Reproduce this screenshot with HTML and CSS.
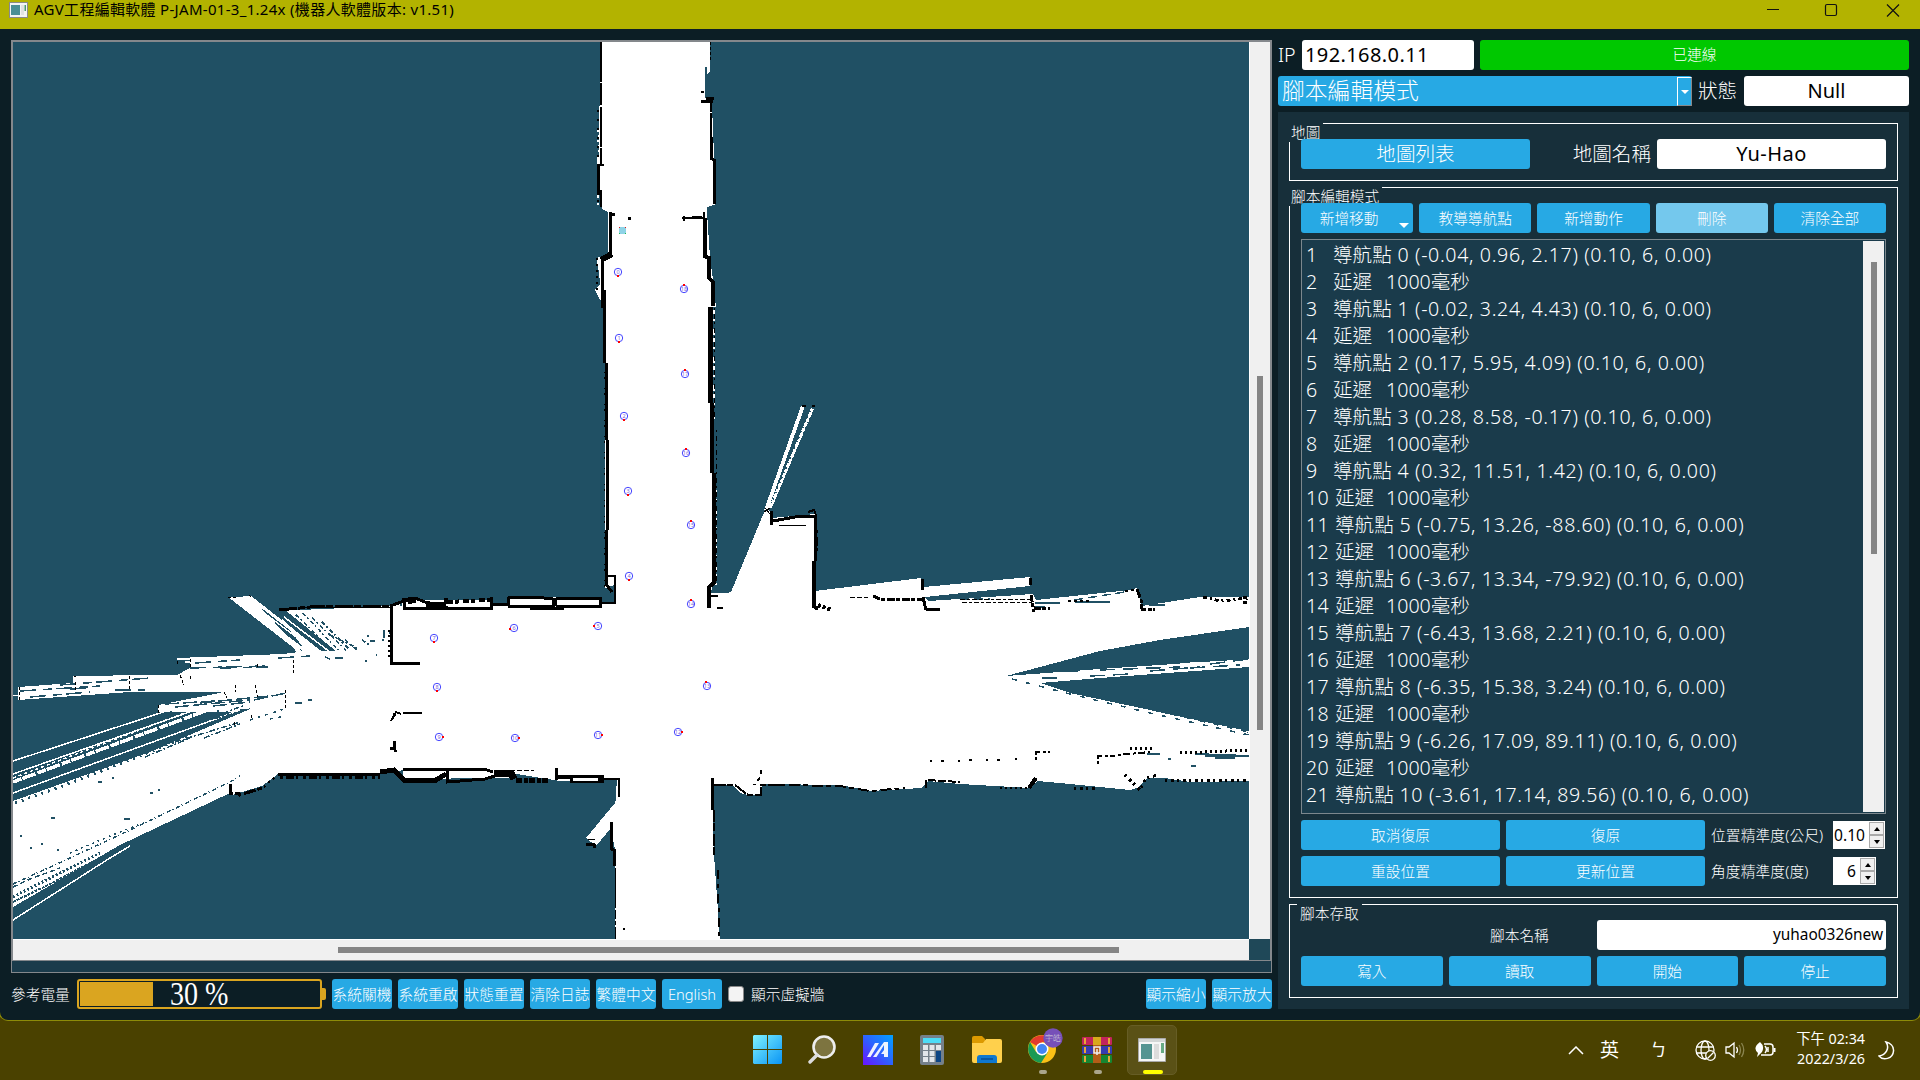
FILE: index.html
```html
<!DOCTYPE html>
<html lang="zh-Hant">
<head>
<meta charset="utf-8">
<title>AGV工程編輯軟體</title>
<link rel="stylesheet" href="styles.css">
</head>
<body>
<div class="desktop">
<div class="window">
  <header class="titlebar">
    <svg class="app-icon" width="19" height="16" viewBox="0 0 19 16"><rect x=".5" y=".5" width="18" height="15" fill="#f4f4f4" stroke="#8a8a8a"/><rect x="2" y="3" width="9" height="10" fill="#4b8f96"/><rect x="12" y="3" width="3" height="10" fill="#e2e2e2"/><rect x="15.500" y="3" width="1.500" height="6" fill="#4b9a70"/></svg>
    <span class="title">AGV工程編輯軟體 P-JAM-01-3_1.24x (機器人軟體版本: v1.51)</span>
    <svg class="caption" width="140" height="20" viewBox="0 0 140 20" fill="none" stroke="#111" stroke-width="1.2"><path d="M7 8.500h12M127 3.500l12 12M139 3.500l-12 12"/><rect x="65.500" y="3.500" width="11" height="11" rx="1.500"/></svg>
  </header>
  <main class="body">
    <section class="left">
      <div class="map-frame">
        <div class="map-view">
          <svg class="map" width="1236" height="897" viewBox="13 42 1236 897" shape-rendering="crispEdges">
            <rect x="13" y="42" width="1236" height="897" fill="#205064"/>
            <g fill="#fff">
              <path d="M602 42H710V72L707 74V82H705V98H712V105L714 156L716 204L707 207V212L710 257L713 280L716 307H713V583L711 593H727L731 592L765 510L768 506L772 518L815 514V591L921 578L924 587L1030 577V586L925 597L928 601L1000 596L1033 594L1036 600L1130 590L1137 588L1142 606L1200 597L1249 597V781L1190 782L1165 778L1147 778L1137 788L1130 790L1070 784L1037 781L1030 788L960 784L928 781L922 788L870 791L840 785L762 784L760 795L748 795L740 793L733 785H712L714 855L720 939H615V850L611 828L596 846L586 838L615 803L617 780L560 781L492 770L403 770L390 773L278 774L262 786L232 795L230 793L120 845L13 907V801L150 752L250 709L158 711L158 705L225 692L130 692L18 700V687L73 683V676L177 675L190 668V660L177 660V658L283 654L299 652L228 597H236L250 596L310 650L276 611L391 606L403 600H491V606H508V597H600V602H615V585L605 588V365L603 304L599 298L595 290L600 284L599 272L596 258L608 254L608 212L602 209L597 165L598 145Z"/>
              <path d="M764 510L801 406H805L768 510ZM13 695H30V696H13ZM587 838L615 803V826L611 828Z"/>
              <path d="M278 611L391 606V652H296Z"/>
              <path d="M403 768H492V774L446 779L403 779ZM446 770H510V778H446Z"/>
            </g>
            <g fill="#205064">
              <path d="M1006 676L1040 667L1100 651L1160 640L1249 627V659L1100 669Z"/>
              <path d="M1040 683L1100 678L1249 667V733L1150 710L1070 693Z"/>
              <path d="M273 611L285 610L336 651H318ZM262 609L275 611L306 651H301Z"/>
              <path d="M925 597L1030 586L1033 594L928 601Z"/>
              <path d="M278 776H393L430 783L500 782L616 783V800L586 836L585 850L230 798L262 788Z"/>
              <path d="M400 599H402V606H400ZM705 67h2v18h-2zM707 209h4v3h-4z"/>
            </g>
            <g fill="none" stroke="#fff" stroke-width="1.500">
              <path d="M13 761L225 692"/><path d="M13 774L195 710"/><path d="M13 793L235 712"/>
              <path d="M13 782L205 711" stroke-width="3.500" stroke-dasharray="9 1 14 2"/>
              <path d="M13 778L190 711" stroke-dasharray="3 3"/>
              <path d="M158 708H240" stroke-width="7" stroke-dasharray="12 2 30 3"/>
              <path d="M13 920L110 858L130 846" />
              <path d="M770 508L814 405" stroke-width="3" stroke-dasharray="5 1 3 2"/>
              <path d="M771 508L811 412"/>
              <path d="M74 677L152 676M185 662L240 657" stroke-width="2"/>
              <path d="M250 597L320 652M237 600L312 656" stroke-width="3"/>
              <path d="M284 617L330 652M268 616L322 656"/>
              <path d="M598 110V207M716 490V590M714 310V420" stroke-dasharray="4 5 2 8 6 3"/>
            </g>
            <g fill="none" stroke="#205064" stroke-width="1.500">
              <path d="M60 685L150 678M20 691L100 686M30 697L90 692M70 689L90 688M115 690L145 690M190 668L265 666M195 663L240 660M220 668L268 667M278 658L310 656M325 657L330 659" stroke-dasharray="16 7 9 4"/>
              <path d="M165 704L215 701M175 707L250 700M200 703L270 696M213 706L250 702M254 700L286 693M295 703L302 703M308 700L312 700" stroke-dasharray="14 4"/>
              <path d="M13 884L70 858L130 830L230 782L240 776" stroke-dasharray="4 2 1 3"/>
              <path d="M13 897L60 873L100 853" stroke-width="3" stroke-dasharray="2 2"/>
              <path d="M13 902L50 884L92 862" stroke-width="2" stroke-dasharray="3 1"/>
              <path d="M13 887L30 879L60 868" stroke-dasharray="5 3"/>
              <path d="M70 853L110 836L146 822" stroke-dasharray="2 4"/>
              <path d="M15 803L60 787L140 756L190 735" stroke-width="3" stroke-dasharray="2 5"/>
              <path d="M145 757L190 738M175 742L240 722M204 738L240 724M180 728L250 709M200 722L245 705" stroke-dasharray="6 2 2 2"/>
              <path d="M250 720L284 709M270 719L285 716" stroke-dasharray="3 5"/>
              <path d="M296 615L332 650M303 613L338 650M312 618L346 650M322 622L350 650M330 635L357 648M345 640L357 650M362 640L371 646" stroke-dasharray="4 2 2 3"/>
              <path d="M370 641h5M367 636h2M382 640h2M384 630v8M365 661h2M376 655h1M335 658h8M389 633h3" />
              <path d="M20 836h2M51 818h4M124 819h6M41 844h2M57 850h2M30 848h2M98 782h4M112 778h2M150 793h3M158 790h2"/>
              <path d="M1010 677L1080 674M1030 676L1060 675M1180 664L1240 661M1090 673L1150 670" stroke="#fff" stroke-width="2"/>
              <path d="M1040 672L1080 671M1090 676L1130 674M1100 670L1180 667M1150 671L1200 667M1210 664L1249 659M1190 668L1240 665M1042 678L1060 678" stroke-dasharray="15 8"/>
              <path d="M1012 679L1070 694L1150 713L1249 735" stroke-dasharray="5 9"/>
              <path d="M1150 711L1249 732" stroke="#fff" stroke-dasharray="9 5"/>
              <path d="M1035 603H1060M1034 607H1045M1075 602H1110M1149 605H1165M1195 754L1249 756M1205 756H1240M1215 758H1235M1147 754H1160M1168 759h3M1191 766h5" stroke-width="2"/>
              <path d="M1074 600L1125 592M960 599h30" stroke-dasharray="9 5"/>
              <path d="M597 45V70M598 92V155M714 107V125M711 45V60" stroke-dasharray="3 2"/>
            </g>
            <g fill="none" stroke="#000" stroke-width="2">
              <path d="M601 42V165" stroke-dasharray="40 1 22 2"/><path d="M598 110V207" stroke-dasharray="2 7"/><path d="M598.500 165V195" stroke-width="3"/><path d="M601 190V207M599 165h5"/>
              <path d="M610.500 212V257M610 214h5" stroke-width="3"/><path d="M601 260L612 254" stroke-width="6"/><path d="M597 258V292" stroke-dasharray="2 4"/>
              <path d="M602 260V304" stroke-width="3"/><path d="M603 290V308" stroke-width="5"/><path d="M604.500 300V363" stroke-width="3"/><path d="M606.500 363V440" stroke-width="3"/><path d="M607.500 440V530" stroke-width="3"/><path d="M606.500 530V585L612 592" stroke-width="3"/><path d="M608 576H615V604"/><path d="M604 345V590" stroke-dasharray="2 9 1 4" stroke-width="1"/>
              <path d="M710 42V62" stroke-dasharray="3 2" stroke-width="1"/><path d="M701 101H713M706 98h8" stroke-width="3"/><path d="M701 92h3"/>
              <path d="M711 103V160" stroke-dasharray="9 1 30 0"/><path d="M711 137V158L714 160V204" stroke-width="3"/>
              <path d="M682 218H704M704 212V222M684 216v5" stroke-width="2"/><path d="M628 218h3M692 217h10" stroke-width="3"/>
              <path d="M704.500 218V256L709 258V278L713 282V306" stroke-width="4"/><path d="M710.500 307V403" stroke-width="5"/><path d="M711.500 403V473" stroke-width="4"/><path d="M713.500 473V583L709 587V608" stroke-width="4"/>
              <path d="M716 430V583M714 308V420" stroke-width="1" stroke-dasharray="2 4 5 3"/><path d="M711 596h7M717 608h6"/>
              <path d="M279 610L310 607L391 606" stroke-width="3" stroke-dasharray="18 1 7 2"/><path d="M300 608L391 607" stroke-width="1"/>
              <path d="M391.500 606V665M393 664L420 663" stroke-width="3"/><path d="M389 630V660" stroke-dasharray="2 3"/>
              <path d="M390 606L404 601V608H492M402 600L415 598L425 602L440 605" stroke-width="3"/>
              <path d="M406 600h8M408 603l8-2" stroke-width="3"/><path d="M426 604H446" stroke-width="5"/><path d="M446 598V607M447 602L490 600" stroke-width="4" stroke-dasharray="6 2 4 4"/><path d="M491 597V608H403M491 604H507" stroke-width="3"/>
              <path d="M508 606V598L535 597L553 599V606H508M530 608H564" stroke-width="3"/><path d="M555 598V606M556 598H600V606H556" stroke-width="3"/><path d="M600 603H615"/>
              <path d="M391 721L396 712L401 714M403 713H422"/><path d="M394 713v3M394 741V748L390 748M395 750V752" stroke-width="3"/>
              <path d="M278 774H380" stroke-width="3"/><path d="M280 777L380 777" stroke-width="4" stroke-dasharray="3 3 8 2 2 5"/><path d="M380 772L394 770L404 780H436L446 774" stroke-width="5"/><path d="M403 769H484L493 772M447 768V782L485 779L498 775" stroke-width="3"/><path d="M494 773H511L514 779" stroke-width="7"/><path d="M510 770H534" stroke-width="1" stroke-dasharray="5 2"/><path d="M516 781L550 780" stroke-width="5" stroke-dasharray="6 2 4 1"/><path d="M556 768V780" stroke-width="3"/><path d="M555 777H602V781H570" stroke-width="4"/><path d="M573 779H598" stroke="#fff" stroke-width="3"/><path d="M603 779H619V797"/>
              <path d="M230 784V793H238L240 795L262 788" stroke-width="3" stroke-dasharray="12 2 7 3"/><path d="M264 787L277 775" stroke-dasharray="2 4"/>
              <path d="M586 844H594L595 848" stroke-width="3"/><path d="M588 839h7" stroke-width="1"/><path d="M611.500 822V849L614 850V866" stroke-width="3"/><path d="M615.500 868V939" stroke-width="1" stroke-dasharray="40 2 9 2 4 2"/><path d="M623 929h2"/>
              <path d="M712.500 778V810" stroke-width="3"/><path d="M714 810V855" stroke-dasharray="12 1 8 3"/><path d="M717.500 870L719.500 939" stroke-dasharray="9 5 4 6"/>
              <path d="M712 785H735L748 795H761V785H780" stroke-dasharray="14 1 6 2"/><path d="M761 770V776L754 785" stroke-dasharray="4 4"/>
              <path d="M780 785L840 786L870 791L905 788" stroke-dasharray="5 4 11 3"/><path d="M926 788V780L960 782" stroke-dasharray="8 2"/><path d="M1000 788H1030" stroke-dasharray="2 3"/><path d="M1029 788L1036 778" stroke-width="4"/><path d="M1036 760V752H1050M1098 764V756H1115M1118 755L1150 752" stroke-dasharray="3 2 7 3"/><path d="M997 760h2M1015 759h3M930 761L1010 760" stroke-dasharray="2 9 3 14"/><path d="M1074 788H1096M1125 775L1140 790L1146 778L1158 775M1165 780H1249" stroke-width="3" stroke-dasharray="2 4 3 3"/><path d="M1130 748L1155 749M1180 753L1249 750" stroke-width="3" stroke-dasharray="2 3"/>
              <path d="M771 511V525M773 521L795 517L815 516V561" stroke-width="3"/><path d="M813.500 561V606L818 609" stroke-width="4"/><path d="M816 530V555" stroke-width="4" stroke-dasharray="3 4 9 2"/><path d="M779 525H806" stroke-width="1"/><path d="M764 512L770 508M765 508L770 514" stroke-width="1"/><path d="M808 512L814 510L816 515M802 406h4M812 406h3"/>
              <path d="M818 605L832 610" stroke-dasharray="3 2" stroke-width="4"/><path d="M850 597H868" stroke-dasharray="5 2" stroke-width="1"/><path d="M873 596L880 599L923 599" stroke-width="3" stroke-dasharray="8 1 4 2"/><path d="M922.500 579V590M923 597L926 610M926 609H940" stroke-width="3"/>
              <path d="M960 599H1032M962 602H1032" stroke-width="1" stroke-dasharray="5 2 3 2"/><path d="M1030.500 578V585" stroke-width="3"/><path d="M1031 595L1034 612M1034 608H1050" stroke-width="3" stroke-dasharray="7 1 4 2"/><path d="M1068 601H1090M1125 591L1137 589" stroke-dasharray="3 3"/><path d="M1137 589L1141 600L1142 609H1155" stroke-width="3" stroke-dasharray="9 2 4 1"/><path d="M1203 597L1220 601L1249 598" stroke-width="3" stroke-dasharray="4 3 2 3"/><path d="M1245 596V606" stroke-dasharray="3 2" stroke-width="4"/>
              <path d="M228 597h9M249 595l3 3M177 661V665M190 659V668M74 676h2M75 682V692M129 676V690M19 687V700M158 705V713M180 675l4 10M190 676v3M224 692l3 6M235 685v7M257 664v3M293 660V675M255 685l3 12M285 690v20M234 722v5M251 715v4" stroke-width="1" stroke-dasharray="3 2"/>
            </g>
            <path fill="#8fd3e6" d="M619 227h7v7h-7z"/><path fill="#e02020" d="M619 227h1v1h-1zM625 227h1v1h-1z"/><path fill="#20c050" d="M619 233h1v1h-1zM625 233h1v1h-1z"/>
            <g class="points">
              <circle cx="618" cy="272" r="3.700"/><circle cx="619" cy="338" r="3.700"/><circle cx="624" cy="416" r="3.700"/><circle cx="628" cy="491" r="3.700"/><circle cx="629" cy="576" r="3.700"/><circle cx="598" cy="626" r="3.700"/><circle cx="514" cy="628" r="3.700"/><circle cx="434" cy="638" r="3.700"/><circle cx="437" cy="687" r="3.700"/><circle cx="439" cy="737" r="3.700"/><circle cx="515" cy="738" r="3.700"/><circle cx="598" cy="735" r="3.700"/><circle cx="678" cy="732" r="3.700"/><circle cx="707" cy="686" r="3.700"/><circle cx="691" cy="604" r="3.700"/><circle cx="691" cy="525" r="3.700"/><circle cx="686" cy="453" r="3.700"/><circle cx="685" cy="374" r="3.700"/><circle cx="684" cy="289" r="3.700"/>
            </g>
            <g class="nums">
              <text x="618" y="274">0</text><text x="619" y="340">1</text><text x="624" y="418">2</text><text x="628" y="493">3</text><text x="629" y="578">4</text><text x="598" y="628">5</text><text x="514" y="630">6</text><text x="434" y="640">7</text><text x="437" y="689">8</text><text x="439" y="739">9</text><text x="515" y="740">10</text><text x="598" y="737">11</text><text x="678" y="734">12</text><text x="707" y="688">13</text><text x="691" y="606">14</text><text x="691" y="527">15</text><text x="686" y="455">16</text><text x="685" y="376">17</text><text x="684" y="291">18</text>
            </g>
            <path fill="#f00" d="M617 275h2v2h-2zM618 341h2v2h-2zM623 419h2v2h-2zM627 494h2v2h-2zM628 579h2v2h-2zM593 625h2v2h-2zM509 628h2v2h-2zM433 641h2v2h-2zM436 690h2v2h-2zM442 736h2v2h-2zM518 737h2v2h-2zM601 734h2v2h-2zM681 731h2v2h-2zM705 681h2v2h-2zM690 599h2v2h-2zM690 520h2v2h-2zM685 448h2v2h-2zM684 369h2v2h-2zM683 284h2v2h-2z"/>
          </svg>
          <div class="vbar"><i></i></div>
          <div class="hbar"><i></i></div>
        </div>
      </div>
      <div class="toolbar">
        <span class="bat-label">參考電量</span>
        <div class="battery"><div class="cell"><i class="charge"></i><span>30 %</span></div><b></b></div>
        <button class="btn s">系統關機</button><button class="btn s">系統重啟</button><button class="btn s">狀態重置</button><button class="btn s">清除日誌</button><button class="btn s">繁體中文</button><button class="btn s">English</button>
        <i class="check"></i><span class="wall">顯示虛擬牆</span>
        <button class="btn s push">顯示縮小</button><button class="btn s">顯示放大</button>
      </div>
    </section>
    <aside class="right">
      <div class="row"><span class="big ip">IP</span><div class="field ipf">192.168.0.11</div><div class="online">已連線</div></div>
      <div class="row"><div class="combo"><span>腳本編輯模式</span><i class="drop"></i></div><span class="big state">狀態</span><div class="field center nullf">Null</div></div>
      <div class="panel">
        <section class="group g1"><h3>地圖</h3>
          <div class="row"><button class="btn large w229">地圖列表</button><span class="big name">地圖名稱</span><div class="field center w229 mapname">Yu-Hao</div></div>
        </section>
        <section class="group g2"><h3>腳本編輯模式</h3>
          <div class="row"><button class="btn f menu">新增移動</button><button class="btn f">教導導航點</button><button class="btn f">新增動作</button><button class="btn f off">刪除</button><button class="btn f">清除全部</button></div>
          <div class="list">
            <div class="items">
              <p><b>1</b>導航點<span> 0 (-0.04, 0.96, 2.17) (0.10, 6, 0.00)</span></p>
              <p><b>2</b><em>延遲</em>1000毫秒</p>
              <p><b>3</b>導航點<span> 1 (-0.02, 3.24, 4.43) (0.10, 6, 0.00)</span></p>
              <p><b>4</b><em>延遲</em>1000毫秒</p>
              <p><b>5</b>導航點<span> 2 (0.17, 5.95, 4.09) (0.10, 6, 0.00)</span></p>
              <p><b>6</b><em>延遲</em>1000毫秒</p>
              <p><b>7</b>導航點<span> 3 (0.28, 8.58, -0.17) (0.10, 6, 0.00)</span></p>
              <p><b>8</b><em>延遲</em>1000毫秒</p>
              <p><b>9</b>導航點<span> 4 (0.32, 11.51, 1.42) (0.10, 6, 0.00)</span></p>
              <p class="d"><b>10</b><em>延遲</em>1000毫秒</p>
              <p class="d"><b>11</b>導航點<span> 5 (-0.75, 13.26, -88.60) (0.10, 6, 0.00)</span></p>
              <p class="d"><b>12</b><em>延遲</em>1000毫秒</p>
              <p class="d"><b>13</b>導航點<span> 6 (-3.67, 13.34, -79.92) (0.10, 6, 0.00)</span></p>
              <p class="d"><b>14</b><em>延遲</em>1000毫秒</p>
              <p class="d"><b>15</b>導航點<span> 7 (-6.43, 13.68, 2.21) (0.10, 6, 0.00)</span></p>
              <p class="d"><b>16</b><em>延遲</em>1000毫秒</p>
              <p class="d"><b>17</b>導航點<span> 8 (-6.35, 15.38, 3.24) (0.10, 6, 0.00)</span></p>
              <p class="d"><b>18</b><em>延遲</em>1000毫秒</p>
              <p class="d"><b>19</b>導航點<span> 9 (-6.26, 17.09, 89.11) (0.10, 6, 0.00)</span></p>
              <p class="d"><b>20</b><em>延遲</em>1000毫秒</p>
              <p class="d"><b>21</b>導航點<span> 10 (-3.61, 17.14, 89.56) (0.10, 6, 0.00)</span></p>
            </div>
            <div class="lbar"><i></i></div>
          </div>
          <div class="row"><button class="btn w199">取消復原</button><button class="btn w199">復原</button><span class="acc">位置精準度(公尺)</span><div class="spin a"><span>0.10</span><div class="arrows"><i class="up"></i><i class="down"></i></div></div></div>
          <div class="row"><button class="btn w199">重設位置</button><button class="btn w199">更新位置</button><span class="acc">角度精準度(度)</span><div class="spin b"><span>6</span><div class="arrows"><i class="up"></i><i class="down"></i></div></div></div>
        </section>
        <section class="group g3"><h3>腳本存取</h3>
          <div class="row"><span class="sname">腳本名稱</span><div class="field script">yuhao0326new</div></div>
          <div class="row"><button class="btn f">寫入</button><button class="btn f">讀取</button><button class="btn f">開始</button><button class="btn f">停止</button></div>
        </section>
      </div>
    </aside>
  </main>
</div>
<footer class="taskbar">
  <div class="apps">
    <svg width="29" height="30" viewBox="0 0 29 30"><defs><linearGradient id="w" x2="1" y2="1"><stop stop-color="#7ff3ff"/><stop offset="1" stop-color="#0a94f5"/></linearGradient></defs><path fill="url(#w)" d="M1 0h13v14H0V1zM15 0h13l1 1v13H15zM0 15h14v14H1l-1-1zM15 15h14v13l-1 1H15z"/></svg>
    <svg width="29" height="30" viewBox="0 0 29 30"><circle cx="16" cy="12" r="10.500" fill="#7d7440" stroke="#eee" stroke-width="2.600"/><path d="M9 20l-7 7" stroke="#dcdcdc" stroke-width="3.400" stroke-linecap="round"/></svg>
    <svg width="30" height="30" viewBox="0 0 30 30"><defs><linearGradient id="m" x1="0" y1="1" x2="1" y2="0"><stop stop-color="#6a12ff"/><stop offset=".5" stop-color="#2d62ff"/><stop offset="1" stop-color="#00a2ff"/></linearGradient></defs><path fill="url(#m)" d="M0 0h30v30H0z"/><path d="M4 22h3.500L16 8h-4zM10 22h3.500L21 10v5l-3 4h3v3h4V7h-4z" fill="#fff" opacity=".92"/></svg>
    <svg width="24" height="30" viewBox="0 0 24 30"><rect width="24" height="30" rx="2" fill="#75808a"/><path fill="#4cdcf7" d="M3 3h18v5H3z"/><path fill="#e2e6ea" d="M3 10h5v5H3zM9.500 10h5v5h-5zM16 10h5v5h-5zM3 16h5v5H3zM9.500 16h5v5h-5zM3 22h5v5H3zM9.500 22h5v5h-5z"/><path fill="#0d4584" d="M16 16h5v11h-5z"/></svg>
    <svg width="30" height="28" viewBox="0 0 30 28"><path fill="#dc9a00" d="M0 2q0-2 2-2h8l3 3v5H0z"/><path fill="#ffd04c" d="M0 7h11l3-4h14q2 0 2 2v20q0 2-2 2H2q-2 0-2-2z"/><path fill="#0f78cf" d="M5 27v-5q0-3 3-3h14q3 0 3 3v5z"/><path d="M9 23h12" stroke="#064c94" stroke-width="1.500"/></svg>
    <svg class="chrome" width="36" height="36" viewBox="0 0 36 36"><circle cx="14" cy="21" r="14" fill="#fbc116"/><path fill="#e33b2e" d="M14 21L2 14A14 14 0 0 1 26 14H14z"/><path fill="#1a9a53" d="M2 14A14 14 0 0 0 13 35L20 24L14 27L8 24z"/><circle cx="14" cy="21" r="6.500" fill="#fff"/><circle cx="14" cy="21" r="5" fill="#4285f4"/><circle cx="25" cy="10" r="9.700" fill="#7650b8"/><text x="25" y="13" text-anchor="middle" font-size="8" fill="#ddd">宇皓</text></svg>
    <svg width="31" height="27" viewBox="0 0 31 27"><rect y="0" width="30" height="8" rx="1" fill="#c2245c"/><rect y="9" width="30" height="8" rx="1" fill="#373ab0"/><rect y="18" width="30" height="8" rx="1" fill="#168531"/><path stroke="#e5a638" stroke-width="2" d="M3 1v6M3 10v6M3 19v6M27 1v6M27 10v6M27 19v6"/><path fill="#d9a91c" d="M11 0h8v8h-8z"/><path fill="#b35d16" d="M11 8h8v18h-8z"/><path d="M12 10h6v6h-6zM15 12v6" fill="none" stroke="#eee" stroke-width="1.500"/></svg>
    <span class="tile"><svg width="28" height="24" viewBox="0 0 28 24"><path fill="#f6f6f6" stroke="#aaa" d="M.5.500h27v23H.5z"/><path fill="#d3d6d6" d="M1 1h26v3H1z"/><path fill="#559491" d="M3 6h11v15H3z"/><path fill="#dcdcdc" d="M16 6h5v15h-5z"/><path fill="#67aa85" d="M23 5h3v10h-3z"/></svg></span>
    <i class="mark m1"></i><i class="mark m2"></i><i class="mark m3"></i>
  </div>
  <div class="tray">
    <svg width="16" height="9" viewBox="0 0 16 9" fill="none" stroke="#fff" stroke-width="1.500"><path d="M1 8l7-7 7 7"/></svg>
    <span class="ime">英</span><span class="bopo">ㄅ</span>
    <svg width="21" height="21" viewBox="0 0 21 21" fill="none" stroke="#fff" stroke-width="1.300"><circle cx="10" cy="10" r="9"/><ellipse cx="10" cy="10" rx="4" ry="9"/><path d="M1.500 7h17M1.500 13h17"/><circle cx="15.500" cy="15.500" r="4.800" fill="#4a4100"/><path d="M12.500 18.500l6-6"/></svg>
    <svg width="20" height="18" viewBox="0 0 20 18" fill="none" stroke="#fff" stroke-width="1.300"><path d="M1 6h3l5-4v14l-5-4H1zM11.500 6q2 3 0 6"/><path d="M14 4q3 5 0 10M16.500 2q4.500 7 0 14" stroke="#8a844f"/></svg>
    <svg width="21" height="16" viewBox="0 0 21 16" fill="none" stroke="#fff" stroke-width="1.500"><path d="M9 2h6q3 0 3 3v5q0 3-3 3H6"/><path d="M19.500 6v4" stroke-width="2"/><path d="M5 0q5 4 2 10L2 15l1-4Q-3 6 5 0z" fill="#fff" stroke="none"/><path d="M10 4q3 3.500 0 7M13 5v5"/></svg>
    <div class="clock"><span>下午 02:34</span><span>2022/3/26</span></div>
    <svg width="17" height="19" viewBox="0 0 17 19" fill="none" stroke="#fff" stroke-width="1.500"><path d="M8 1C12 7 8 14 1 15C5 20 15 18 15.500 10C16 5 12 2 8 1z"/></svg>
  </div>
</footer>
</div>
</body>
</html>
```
FILE: styles.css
```css
* { box-sizing: border-box; }
body { margin: 0; width: 1920px; height: 1080px; overflow: hidden; color: #fff; background: #4a4100; font: 300 14.7px/20px "Noto Sans", "Noto Sans CJK TC", sans-serif; }
i, em { font-style: normal; }
button { font: inherit; color: inherit; border: 0; padding: 0; }
.desktop { display: flex; flex-direction: column; height: 1080px; background: #4a4100; }
.window { height: 1020px; display: flex; flex-direction: column; background: #0c1e25; border-radius: 0 0 8px 8px; overflow: hidden; box-shadow: 0 0 0 1px #8d8b08; }
.titlebar { height: 29px; flex: none; display: flex; align-items: flex-start; background: #b3b300; color: #000; padding: 1px 23px 0 9px; }
.app-icon { margin: 1px 6px 0 0; }
.title { line-height: 16px; white-space: nowrap; font-size: 15px; letter-spacing: .3px; font-weight: 400; }
.caption { margin-left: auto; position: relative; left: 3px; }
.body { flex: 1; display: flex; padding: 11px; gap: 6px; }
.left { width: 1261px; display: flex; flex-direction: column; gap: 6px; }
.map-frame { height: 933px; border: 1px solid #84888c; background: #1a3b4b; }
.map-view { height: 920px; border: 1px solid #84888c; display: grid; grid-template: 897px 21px / 1236px 21px; background: #1f4858; }
.map { display: block; }
.points circle { fill: #fff; stroke: #4646ff; stroke-width: 1; shape-rendering: auto; }
.nums text { font-size: 5.5px; font-weight: 400; text-anchor: middle; fill: #7a66dd; }
.vbar, .hbar { background: #f0f0f0; }
.vbar { border-left: 1px solid #fff; padding: 334px 0 0 7px; }
.hbar { border-top: 1px solid #fff; padding: 7px 0 0 325px; }
.vbar i, .hbar i, .lbar i { display: block; background: #858585; }
.vbar i { width: 6px; height: 354px; }
.hbar i { width: 781px; height: 6px; }
.toolbar { height: 30px; display: flex; gap: 6px; align-items: center; }
.bat-label { width: 60px; white-space: nowrap; }
.battery { display: flex; align-items: center; width: 249px; }
.battery b { width: 4px; height: 12px; background: #daa520; border-radius: 0 2px 2px 0; }
.cell { width: 246px; height: 30px; border: 2px solid #daa520; border-radius: 3px; padding: 1px; display: flex; align-items: center; }
.charge { width: 73px; height: 24px; background: #daa520; }
.cell span { margin-left: 17px; font: 33px/24px "Liberation Serif", serif; white-space: nowrap; transform: scaleX(.85); transform-origin: left; }
.btn { height: 30px; background: #27a9e4; border-radius: 3px; text-align: center; white-space: nowrap; display: flex; align-items: center; justify-content: center; position: relative; }
.s { width: 60px; flex: none; }
.push { margin-left: auto; }
.check { width: 16px; height: 16px; background: #f3f3f3; border: 1px solid #888; border-radius: 3px; }
.wall { margin-left: 1px; }
.right { width: 631px; display: flex; flex-direction: column; gap: 6px; }
.row { display: flex; gap: 6px; height: 30px; align-items: center; flex: none; white-space: nowrap; }
.big { font-size: 19.6px; }
.ip { width: 18px; }
.field { height: 30px; background: #fff; color: #000; border-radius: 3px; font-size: 20px; font-weight: 400; line-height: 30px; padding: 0 3px; }
.center { text-align: center; }
.ipf { width: 172px; letter-spacing: .4px; }
.mapname { letter-spacing: .5px; }
.online { flex: 1; height: 30px; line-height: 29px; background: #00c800; border-radius: 3px; text-align: center; }
.combo { width: 414px; height: 30px; border-radius: 3px; background: #27a9e4; font-size: 22.8px; line-height: 29px; display: flex; justify-content: space-between; padding-left: 4px; }
.drop { width: 15px; margin-top: 1px; border: 1px solid #fff; border-right-color: #888; border-bottom-color: #888; display: flex; align-items: center; justify-content: center; }
.drop::after, .menu::after { content: ""; border: 4px solid transparent; border-top: 4px solid #fff; border-bottom: 0; }
.state { width: 40px; }
.nullf { width: 165px; }
.panel { flex: 1; background: #172f3a; padding: 11px; display: flex; flex-direction: column; gap: 6px; }
.group { position: relative; border: 1px solid #fff; padding: 15px 11px 11px; display: flex; flex-direction: column; gap: 6px; }
.group h3 { margin: 0; font: inherit; line-height: 18px; position: absolute; left: -1px; top: -1px; height: 19px; padding: 0 3px 0 2px; background: #172f3a; white-space: nowrap; }
.g1 { height: 58px; }
.g2 { height: 711px; }
.g3 { height: 94px; }
.group.g3 h3 { left: 7px; padding: 0 3px; }
.large { font-size: 19.6px; }
.w229 { width: 229px; }
.name { margin-left: auto; }
.f { flex: 1 1 112px; }
.off { background: #74c8ed; }
.menu { padding-right: 16px; flex-basis: 112px; min-width: 0; }
.g2 .f { flex: 1 0 112px; }
.menu::after { position: absolute; right: 4px; bottom: 5px; border-width: 5px 5px 0; }
.list { height: 575px; border: 1px solid #7c878d; background: #1a3b4b; padding: 1px; display: flex; justify-content: space-between; }
.items { padding: 1px 0 0 3px; font-size: 19.6px; overflow: hidden; }
.items p { margin: 0; height: 27px; line-height: 26px; white-space: nowrap; }
.items p span { letter-spacing: .64px; }
.items b { display: inline-block; font-weight: inherit; width: 27px; letter-spacing: .3px; }
.items em { display: inline-block; width: 53px; }
.items .d b { width: 29px; }
.items .d em { width: 51px; }
.lbar { width: 21px; background: #f0f0f0; padding: 21px 0 0 8px; }
.lbar i { width: 6px; height: 292px; }
.w199 { width: 199px; }
.acc { width: 116px; letter-spacing: .15px; }
.spin { height: 28px; background: #fff; color: #000; font-weight: 400; display: flex; font-size: 15.6px; line-height: 28px; padding: 1px; }
.spin span { flex: 1; text-align: right; padding-right: 4px; line-height: 26px; }
.spin.a { width: 52px; }
.spin.b { width: 43px; }
.arrows { width: 15px; display: flex; flex-direction: column; }
.arrows i { flex: 1; background: #f0f0f0; border: 1px solid #aaa; display: flex; align-items: center; justify-content: center; }
.arrows i::after { content: ""; border: 3.5px solid transparent; }
.arrows .up::after { border-bottom: 4px solid #000; border-top: 0; }
.arrows .down::after { border-top: 4px solid #000; border-bottom: 0; }
.sname { width: 290px; padding-left: 189px; }
.script { flex: 1; text-align: right; font-size: 15.4px; }
.taskbar { height: 60px; display: flex; justify-content: space-between; padding: 0 25px 0 753px; }
.apps { position: relative; display: flex; align-items: center; height: 60px; width: 425px; }
.apps svg { flex: none; }
.apps > svg:nth-child(2) { margin-left: 26px; }
.apps > svg:nth-child(3) { margin-left: 26px; }
.apps > svg:nth-child(4) { margin-left: 27px; }
.apps > svg:nth-child(5) { margin-left: 28px; }
.apps > .chrome { margin: -8px 0 0 26px; }
.apps > svg:nth-child(7) { margin-left: 18px; }
.tile { width: 50px; height: 50px; margin-left: 14px; background: #5a5116; border: 1px solid #665d25; border-radius: 5px; display: flex; align-items: center; justify-content: center; flex: none; }
.mark { position: absolute; top: 50px; height: 4px; border-radius: 2px; background: #aaa68c; width: 8px; }
.m1 { left: 286px; }
.m2 { left: 341px; }
.m3 { left: 390px; width: 20px; background: #ff0; }
.tray { display: flex; align-items: center; height: 60px; }
.ime { font-size: 19px; font-weight: 400; margin-left: 16px; }
.bopo { font-size: 17px; font-weight: 400; margin-left: 31px; width: 17px; }
.tray svg:nth-of-type(2) { margin-left: 28px; }
.tray svg:nth-of-type(3) { margin-left: 9px; }
.tray svg:nth-of-type(4) { margin-left: 10px; }
.clock { width: 89px; display: flex; flex-direction: column; text-align: right; font-size: 14.3px; font-weight: 400; margin: -2px 13px 0 0; white-space: nowrap; }
```
